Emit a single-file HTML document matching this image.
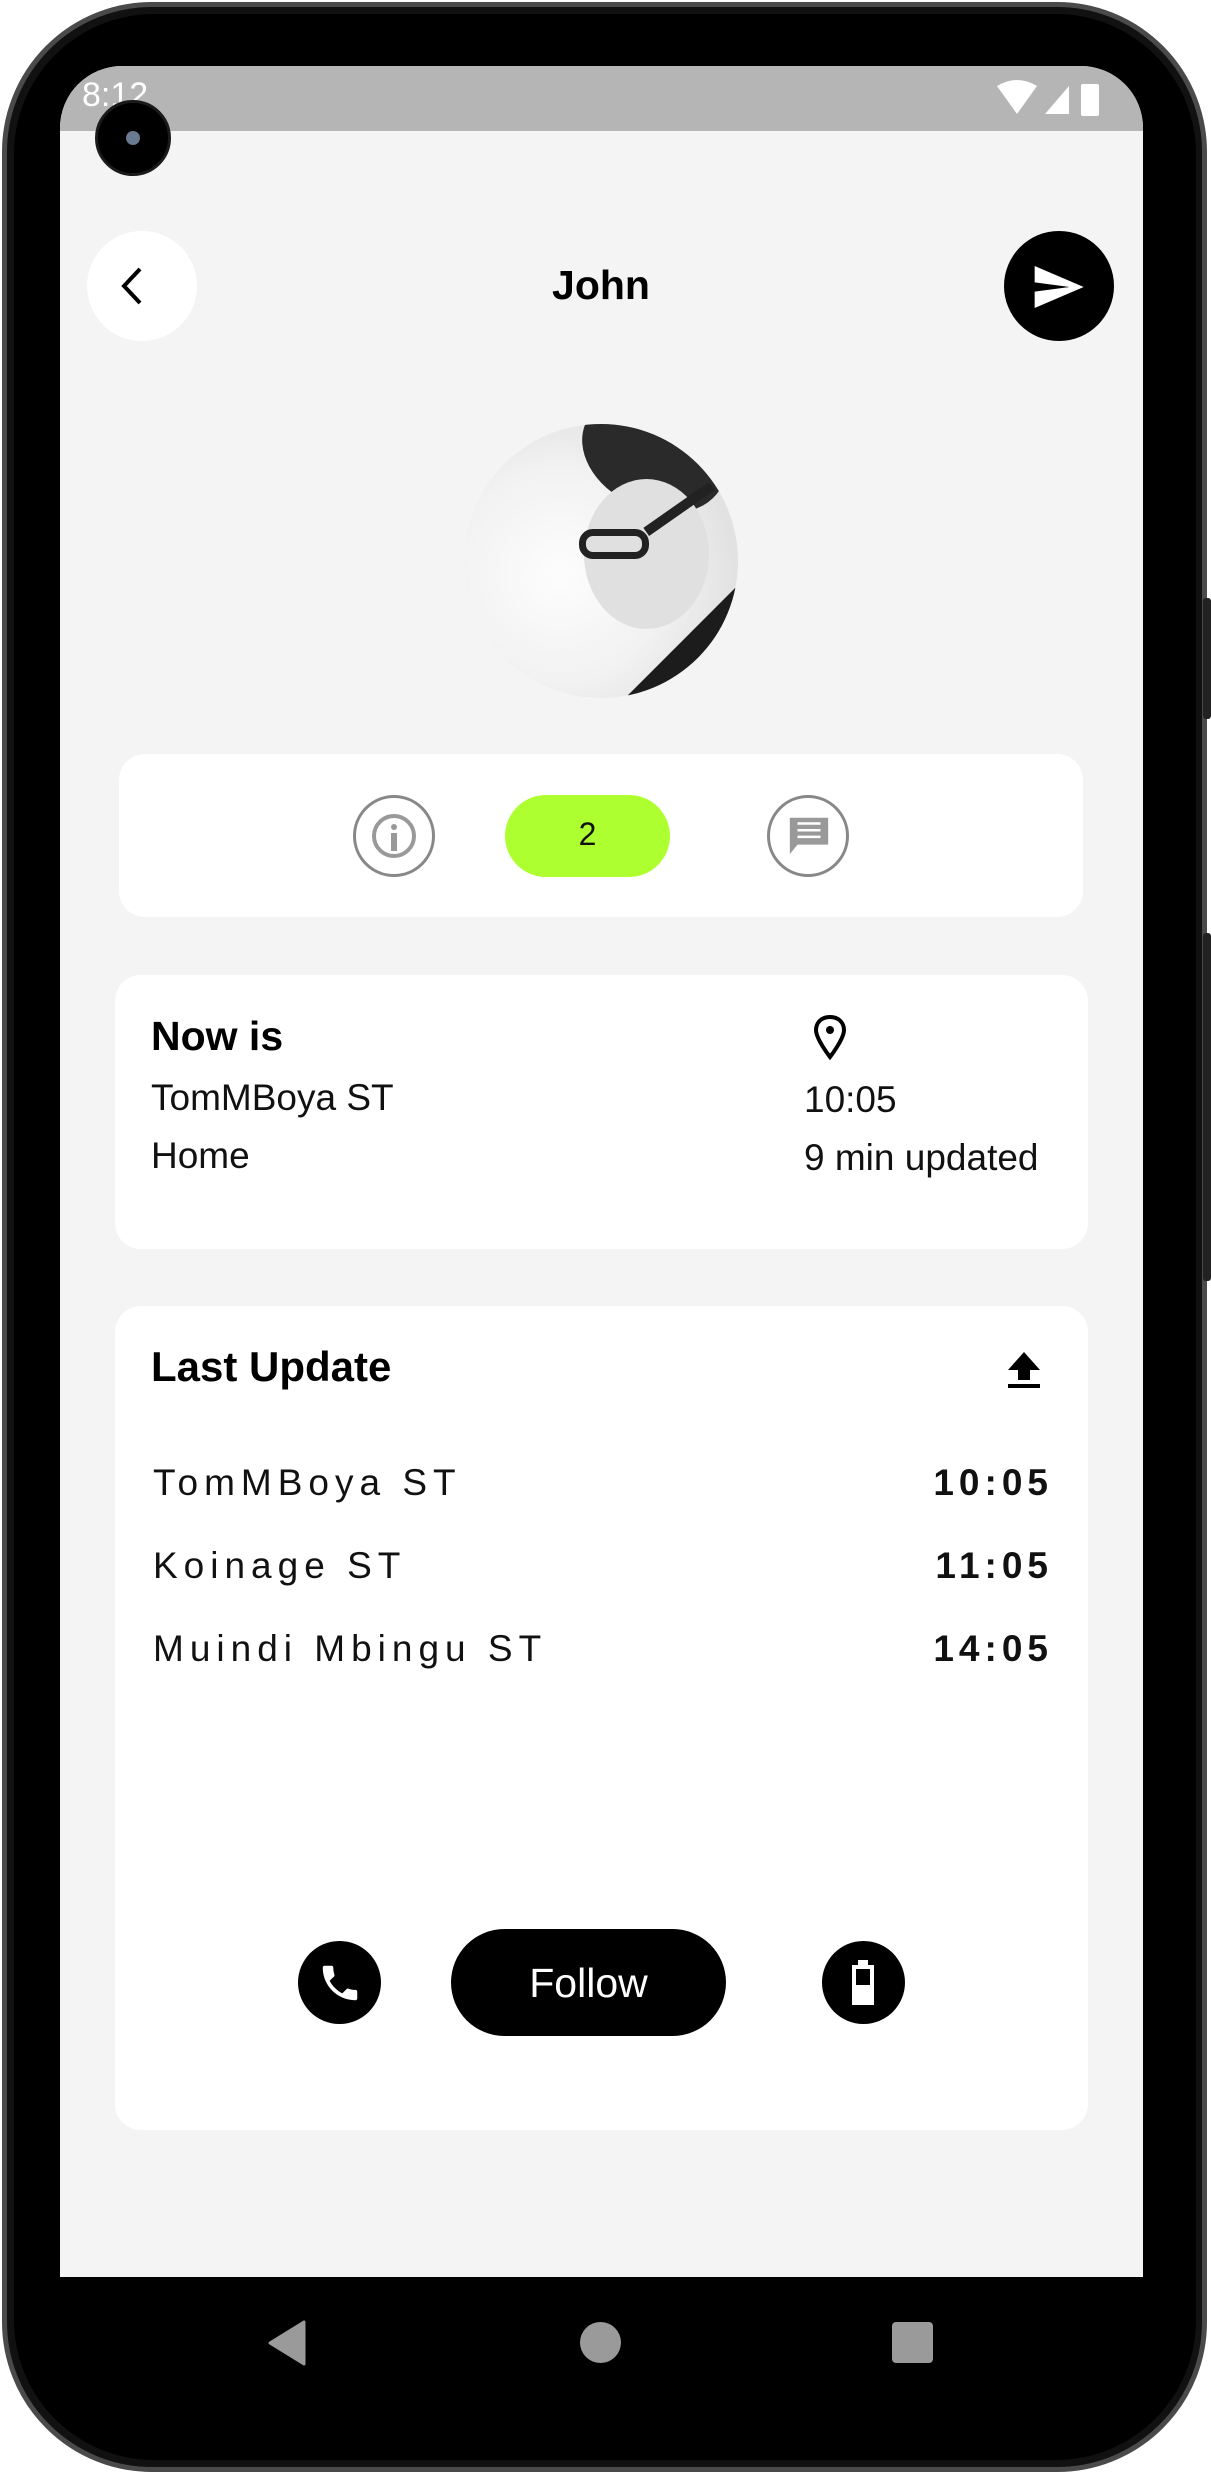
<!DOCTYPE html>
<html><head><meta charset="utf-8"><style>
*{margin:0;padding:0;box-sizing:border-box}
body{width:1211px;height:2474px;background:#fff;position:relative;overflow:hidden;font-family:"Liberation Sans",sans-serif}
.a{position:absolute}
.card{position:absolute;background:#fff;border-radius:26px}
.t{position:absolute;white-space:nowrap;color:#111}
</style></head><body>
<div class="a" style="left:2px;top:2px;width:1205px;height:2470px;border-radius:150px;background:#111;border:5px solid #4a4a4a"></div>
<div class="a" style="left:14px;top:14px;width:1182px;height:2446px;border-radius:140px;background:#000"></div>
<div class="a" style="left:1203px;top:598px;width:8px;height:121px;background:#222;border-radius:3px"></div>
<div class="a" style="left:1203px;top:933px;width:8px;height:348px;background:#222;border-radius:3px"></div>
<div class="a" style="left:60px;top:66px;width:1083px;height:2211px;background:#f4f4f4;border-radius:62px 62px 0 0;overflow:hidden">
  <div class="a" style="left:0;top:0;width:1083px;height:65px;background:#b5b5b5"></div>
  <div class="t" style="left:22px;top:10px;font-size:34px;color:#fff">8:12</div>
  <svg class="a" style="left:935px;top:12px" width="120" height="46" viewBox="0 0 120 46"><path d="M2 8 Q22 -4 42 8 L22 36Z" fill="#fff"/><path d="M50 36 L74 8 L74 36Z" fill="#fff"/><rect x="86" y="6" width="18" height="32" rx="2" fill="#fff"/></svg>
</div>
<div class="a" style="left:95px;top:100px;width:76px;height:76px;border-radius:50%;background:#000;border:3px solid #1a1a1a"></div>
<div class="a" style="left:126px;top:131px;width:14px;height:14px;border-radius:50%;background:#6a7a90"></div>
<div class="a" style="left:87px;top:231px;width:110px;height:110px;border-radius:50%;background:#fff"></div>
<svg class="a" style="left:110px;top:261px" width="50" height="50" viewBox="0 0 50 50"><path d="M30 8 L14 25 L30 42" fill="none" stroke="#000" stroke-width="4"/></svg>
<div class="t" style="left:0;width:1202px;text-align:center;top:262px;font-size:41px;font-weight:bold;color:#000">John</div>
<div class="a" style="left:1004px;top:231px;width:110px;height:110px;border-radius:50%;background:#000"></div>
<svg class="a" style="left:1030px;top:259px" width="56" height="56" viewBox="0 0 24 24"><path d="M2 21 L23 12 L2 3 L2 10 L17 12 L2 14Z" fill="#fff"/></svg>
<div class="a" style="left:464px;top:424px;width:274px;height:274px;border-radius:50%;overflow:hidden;background:radial-gradient(circle at 35% 55%,#fdfdfd 0,#f2f2f2 45%,#e2e2e2 75%)">
  <div class="a" style="left:115px;top:-25px;width:150px;height:110px;border-radius:50%;background:#2a2a2a;transform:rotate(25deg)"></div>
  <div class="a" style="left:120px;top:55px;width:125px;height:150px;border-radius:50%;background:#e0e0e0"></div>
  <div class="a" style="left:115px;top:105px;width:70px;height:30px;border:7px solid #222;border-radius:14px"></div>
  <div class="a" style="left:175px;top:80px;width:80px;height:10px;background:#222;transform:rotate(-35deg)"></div>
  <div class="a" style="left:160px;top:210px;width:180px;height:120px;background:#1c1c1c;transform:rotate(-45deg)"></div>
</div>
<div class="card" style="left:119px;top:754px;width:964px;height:163px"></div>
<div class="a" style="left:353px;top:795px;width:82px;height:82px;border-radius:50%;border:3px solid #888"></div>
<div class="a" style="left:372px;top:814px;width:44px;height:44px;border-radius:50%;border:4px solid #999"></div>
<div class="a" style="left:391px;top:824px;width:6px;height:6px;background:#999;border-radius:50%"></div>
<div class="a" style="left:391px;top:833px;width:6px;height:18px;background:#999"></div>
<div class="a" style="left:505px;top:795px;width:165px;height:82px;border-radius:41px;background:#adff2f"></div>
<div class="t" style="left:505px;width:165px;text-align:center;top:816px;font-size:32px">2</div>
<div class="a" style="left:767px;top:795px;width:82px;height:82px;border-radius:50%;border:3px solid #888"></div>
<svg class="a" style="left:786px;top:812px" width="46" height="46" viewBox="0 0 24 24"><path d="M2 3 H22 V17 H6 L2 22Z" fill="#999"/><path d="M6 6 H18 M6 9.5 H18 M6 13 H18" stroke="#fff" stroke-width="1.3"/></svg>
<div class="card" style="left:115px;top:975px;width:973px;height:274px"></div>
<div class="t" style="left:151px;top:1013px;font-size:41px;font-weight:bold;color:#000">Now is</div>
<div class="t" style="left:151px;top:1077px;font-size:37px">TomMBoya ST</div>
<div class="t" style="left:151px;top:1135px;font-size:37px">Home</div>
<svg class="a" style="left:810px;top:1013px" width="40" height="48" viewBox="0 0 20 24"><path d="M10 2 C5.5 2 3 5 3 8.5 C3 13 10 22 10 22 C10 22 17 13 17 8.5 C17 5 14.5 2 10 2Z" fill="none" stroke="#000" stroke-width="2"/><circle cx="10" cy="8.5" r="2" fill="#000"/></svg>
<div class="t" style="left:804px;top:1079px;font-size:37px">10:05</div>
<div class="t" style="left:804px;top:1137px;font-size:37px">9 min updated</div>
<div class="card" style="left:115px;top:1306px;width:973px;height:824px"></div>
<div class="t" style="left:151px;top:1343px;font-size:42px;font-weight:bold;color:#000">Last Update</div>
<svg class="a" style="left:1004px;top:1348px" width="40" height="42" viewBox="0 0 20 21"><path d="M10 2 L18 11 H13 V16 H7 V11 H2Z M2 18 H18 V20 H2Z" fill="#000"/></svg>
<div class="t" style="left:153px;top:1462px;font-size:37px;letter-spacing:6px">TomMBoya ST</div>
<div class="t" style="left:153px;top:1545px;font-size:37px;letter-spacing:6px">Koinage ST</div>
<div class="t" style="left:153px;top:1628px;font-size:37px;letter-spacing:6px">Muindi Mbingu ST</div>
<div class="t" style="right:158px;top:1462px;font-size:37px;letter-spacing:5px;font-weight:bold">10:05</div>
<div class="t" style="right:158px;top:1545px;font-size:37px;letter-spacing:5px;font-weight:bold">11:05</div>
<div class="t" style="right:158px;top:1628px;font-size:37px;letter-spacing:5px;font-weight:bold">14:05</div>
<div class="a" style="left:298px;top:1941px;width:83px;height:83px;border-radius:50%;background:#000"></div>
<svg class="a" style="left:317px;top:1960px" width="46" height="46" viewBox="0 0 24 24"><path d="M6.6 10.8c1.4 2.8 3.8 5.1 6.6 6.6l2.2-2.2c.3-.3.7-.4 1-.2 1.1.4 2.3.6 3.6.6.6 0 1 .4 1 1V20c0 .6-.4 1-1 1C10.6 21 3 13.4 3 4c0-.6.4-1 1-1h3.5c.6 0 1 .4 1 1 0 1.3.2 2.5.6 3.6.1.3 0 .7-.2 1z" fill="#fff"/></svg>
<div class="a" style="left:451px;top:1929px;width:275px;height:107px;border-radius:54px;background:#000"></div>
<div class="t" style="left:451px;width:275px;text-align:center;top:1960px;font-size:41px;color:#fff">Follow</div>
<div class="a" style="left:822px;top:1941px;width:83px;height:83px;border-radius:50%;background:#000"></div>
<div class="a" style="left:858px;top:1960px;width:10px;height:7px;background:#fff"></div>
<div class="a" style="left:852px;top:1965px;width:22px;height:40px;border:4px solid #fff;background:#000"></div>
<div class="a" style="left:852px;top:1985px;width:22px;height:20px;background:#fff"></div>
<svg class="a" style="left:266px;top:2320px" width="40" height="46" viewBox="0 0 40 46"><path d="M38 2 V44 L4 23Z" fill="#9a9a9a" stroke="#9a9a9a" stroke-width="3" stroke-linejoin="round"/></svg>
<div class="a" style="left:580px;top:2322px;width:41px;height:41px;border-radius:50%;background:#9a9a9a"></div>
<div class="a" style="left:892px;top:2322px;width:41px;height:41px;border-radius:4px;background:#9a9a9a"></div>
</body></html>
